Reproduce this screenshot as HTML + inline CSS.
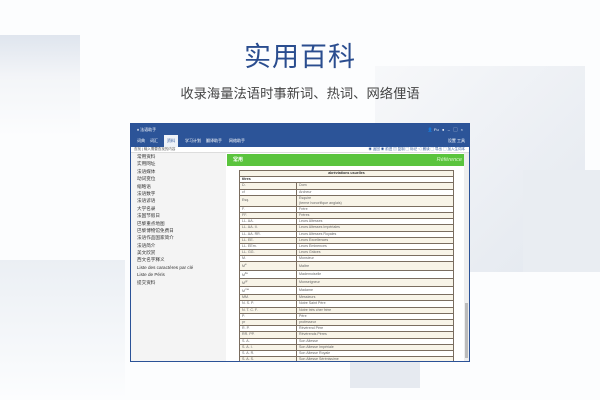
<!DOCTYPE html>
<html><head><meta charset="utf-8"><style>
*{margin:0;padding:0;box-sizing:border-box}
body{width:600px;height:400px;overflow:hidden;background:#fcfdfe;position:relative;font-family:"Liberation Sans","Noto Sans CJK SC",sans-serif}
.bg{position:absolute}
.t{position:absolute;left:0;width:600px;text-align:center}
.win{position:absolute;left:130px;top:123px;width:340px;height:239px;border:1px solid #2b5297;background:#fff;overflow:hidden}
.tb{position:absolute;left:0;top:0;width:100%;height:23px;background:#2c5498;color:#fff;font-size:4px}
.tb span{position:absolute}
.tool{position:absolute;top:23px;left:0;width:100%;height:6px;background:#fff;border-bottom:1px solid #ddd;font-size:3.5px;color:#555}
.side{position:absolute;left:0;top:29px;width:95px;bottom:0;background:#f4f4f4;font-size:4.6px;color:#333}
.side div{height:7.4px;line-height:7.4px;padding-left:6px}
.green{position:absolute;left:96px;top:30px;width:238px;height:12px;background:#5ac43d;color:#fff;font-size:5px;font-weight:bold;line-height:12px;padding-left:6px}
.green i{position:absolute;right:3px;font-size:5.5px;color:#d8f5cc;font-weight:normal}
.sb{position:absolute;right:0;top:29px;width:5px;bottom:0;background:#eee}
.sb b{position:absolute;left:1px;top:150px;width:3px;height:55px;background:#bbb}
table{position:absolute;left:108px;top:46px;width:215px;border-collapse:collapse;font-size:3.6px;color:#666}
td{border:1px solid #7a6d60;height:6.2px;padding:0 2px;line-height:5px;background:#fff}
tr:nth-child(odd) td{background:#f8f4e8}
</style></head><body>
<div class="bg" style="left:0;top:35px;width:80px;height:42px;background:linear-gradient(180deg,#dfe5ee,#f3f5f8)"></div>
<div class="bg" style="left:0;top:77px;width:80px;height:60px;background:linear-gradient(180deg,#f3f5f8,#fcfdfe)"></div>
<div class="bg" style="left:375px;top:66px;width:210px;height:206px;background:linear-gradient(135deg,#f7f8fa,#e3e8ef)"></div>
<div class="bg" style="left:523px;top:170px;width:77px;height:102px;background:#e9edf2"></div>
<div class="bg" style="left:0;top:260px;width:125px;height:140px;background:linear-gradient(180deg,#ebeff4,#fcfdfe)"></div>
<div class="bg" style="left:350px;top:360px;width:70px;height:28px;background:#e6eaf0"></div>
<div class="t" style="top:35px;font-size:27px;color:#2a4d8f;letter-spacing:1px">实用百科</div>
<div class="t" style="top:83px;font-size:13.3px;color:#444">收录海量法语时事新词、热词、网络俚语</div>
<div class="win">
<div class="tb"><span style="left:6px;top:3px">♦ 法语助手</span>
<span style="right:6px;top:3px">👤 Fu &nbsp; ● &nbsp; – &nbsp; ▢ &nbsp; ×</span>
<span style="left:6px;top:14px">词典</span><span style="left:19px;top:14px">词汇</span>
<span style="left:33px;top:11px;width:14px;height:12px;background:#eef2f8;color:#2c5498;text-align:center;line-height:12px">资料</span>
<span style="left:54px;top:14px">学习计划</span><span style="left:75px;top:14px">翻译助手</span><span style="left:98px;top:14px">网络助手</span>
<span style="right:4px;top:14px">设置 工具</span></div>
<div class="tool"><span style="position:absolute;left:3px;top:0">查找 | 输入需要查找的内容</span><span style="position:absolute;right:4px;top:0;color:#2c5498">◉ 返回 ◉ 前进 ▤ 复制 ▢ 标记 ◁ 朗读 ▢ 导出 ▢ 加入生词本</span></div>
<div class="side"><div>常用资料</div><div>实用网址</div><div>法语媒体</div><div>动词变位</div><div>缩略语</div><div>法语数字</div><div>法语谚语</div><div>大学名录</div><div>法国节假日</div><div>巴黎重点地图</div><div>巴黎博物馆免费日</div><div>法语作品国家简介</div><div>法语简介</div><div>美文欣赏</div><div>西文名字释义</div><div>Liste des caractères par clé</div><div>Liste de Péris</div><div>提交资料</div></div>
<div class="green">常用<i>Référence</i></div>
<div class="sb"><b></b></div>
<table>
<tr><td colspan="2" style="text-align:center;font-weight:bold;color:#333">abréviations usuelles</td></tr>
<tr><td colspan="2" style="font-weight:bold;color:#333;background:#fff">titres</td></tr>
<tr><td style="width:57px">D.</td><td>Dom</td></tr>
<tr><td>cf</td><td>Archeur</td></tr>
<tr><td style="height:11px">Esq.</td><td>Esquire<br>(terme honorifique anglais)</td></tr>
<tr><td>F.</td><td>Frère</td></tr>
<tr><td>FF.</td><td>Frères</td></tr>
<tr><td>LL. AA.</td><td>Leurs Altesses</td></tr>
<tr><td>LL. AA. II.</td><td>Leurs Altesses Impériales</td></tr>
<tr><td>LL. AA. RR.</td><td>Leurs Altesses Royales</td></tr>
<tr><td>LL. EE.</td><td>Leurs Excellences</td></tr>
<tr><td>LL. EEm.</td><td>Leurs Eminences</td></tr>
<tr><td>LL. GG.</td><td>Leurs Grâces</td></tr>
<tr><td>M.</td><td>Monsieur</td></tr>
<tr><td style="height:7.5px">M<sup>e</sup></td><td>Maître</td></tr>
<tr><td style="height:7.5px">M<sup>lle</sup></td><td>Mademoiselle</td></tr>
<tr><td style="height:7.5px">M<sup>gr</sup></td><td>Monseigneur</td></tr>
<tr><td style="height:7.5px">M<sup>me</sup></td><td>Madame</td></tr>
<tr><td>MM.</td><td>Messieurs</td></tr>
<tr><td>N. S. P.</td><td>Notre Saint Père</td></tr>
<tr><td>N. T. C. F.</td><td>Notre très cher frère</td></tr>
<tr><td>P.</td><td>Père</td></tr>
<tr><td>pr</td><td>professeur</td></tr>
<tr><td>R. P.</td><td>Révérend Père</td></tr>
<tr><td>RR. PP.</td><td>Révérends Pères</td></tr>
<tr><td>S. A.</td><td>Son Altesse</td></tr>
<tr><td>S. A. I.</td><td>Son Altesse Impériale</td></tr>
<tr><td>S. A. R.</td><td>Son Altesse Royale</td></tr>
<tr><td>S. A. S.</td><td>Son Altesse Sérénissime</td></tr>
</table>
</div>
</body></html>
